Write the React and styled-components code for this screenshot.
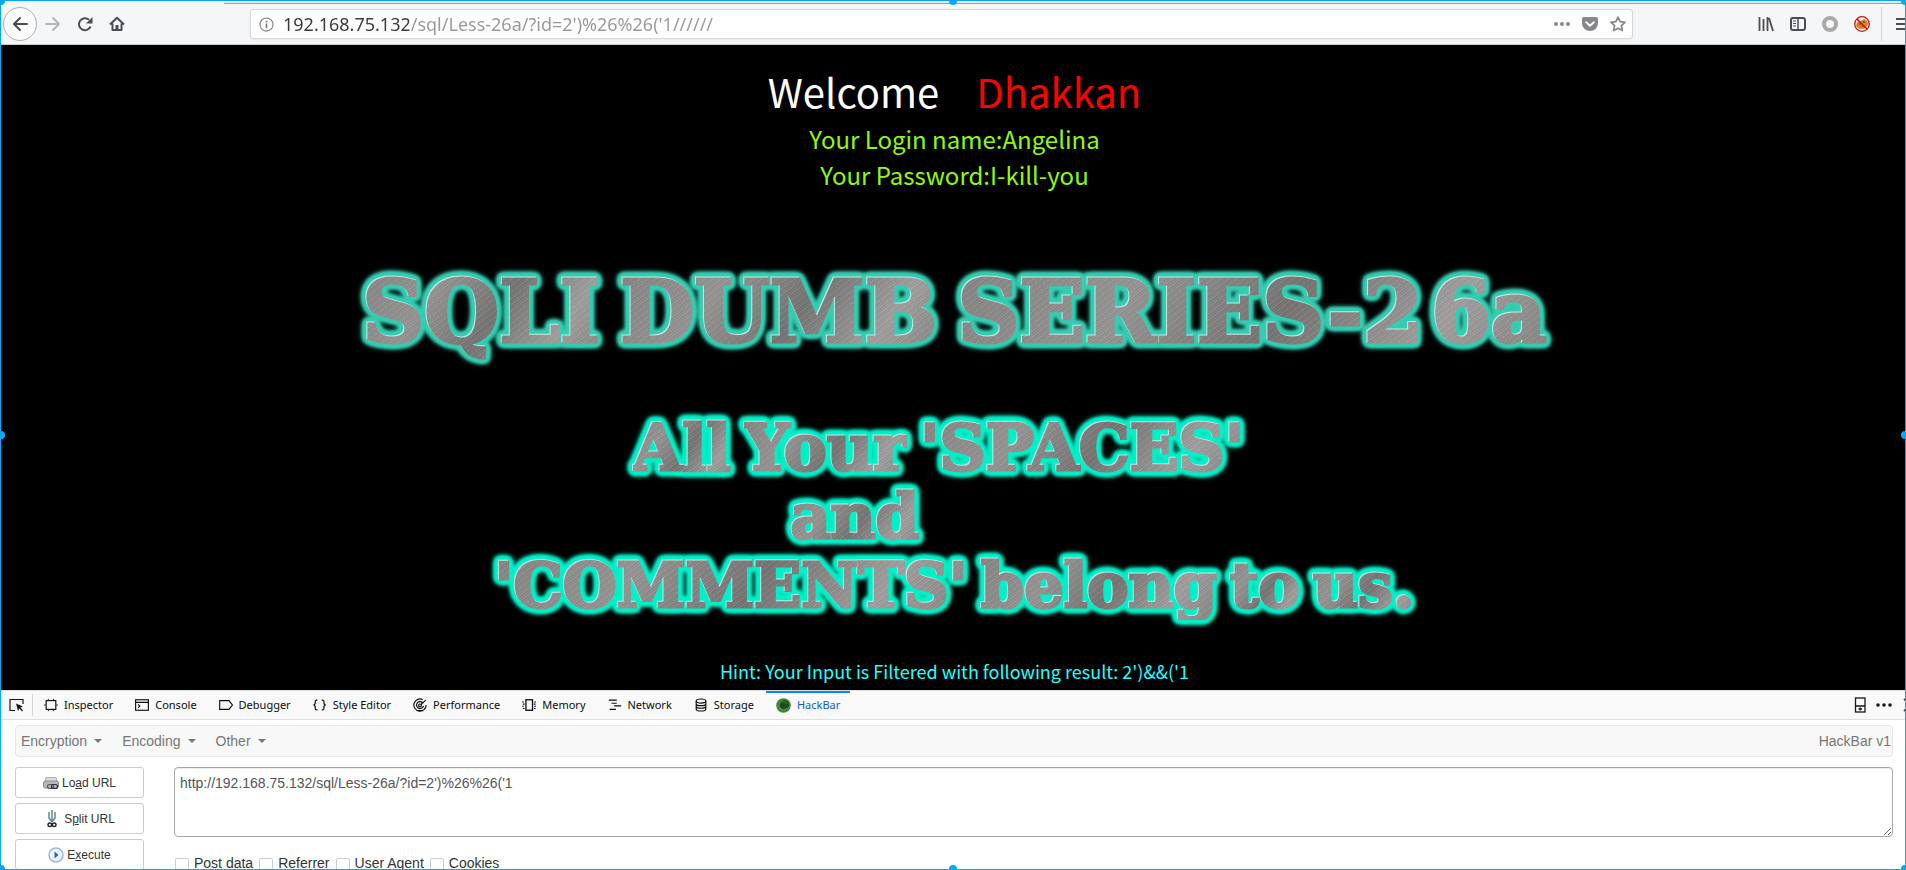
import React from "react";
import styled, { createGlobalStyle, css } from "styled-components";

const Global = createGlobalStyle`
  *, *::before, *::after { box-sizing: border-box; }
  html, body { margin: 0; height: 100%; overflow: hidden; background: #fff; }
  button, input, textarea { font: inherit; }
`;

const uiFont = `"Noto Sans", "Open Sans", sans-serif`;
const pageFont = `"Noto Sans CJK SC", "Noto Sans", sans-serif`;
const barFont = `"Liberation Sans", Arial, sans-serif`;

const Window = styled.div`
  display: flex;
  flex-direction: column;
  height: 100vh;
  overflow: hidden;
`;

/* selection frame over the window */
const Frame = styled.div`
  position: fixed;
  inset: 0;
  border: 1px solid #0aa7f5;
  pointer-events: none;
`;
const Handle = styled.i`
  position: absolute;
  left: ${(p) => p.$x};
  top: ${(p) => p.$y};
  width: 8px;
  height: 8px;
  margin: -4px;
  border-radius: 4px;
  background: #0aa7f5;
`;

/* ---------- browser toolbar ---------- */
const TabEdge = styled.div`
  flex: none;
  height: 4px;
  margin-left: 224px;
  background: #eeeef0;
  border-bottom: 1px solid #9d9da3;
`;
const Chrome = styled.header`
  flex: none;
  background: #f5f6f7;
  border-bottom: 1px solid #ccc;
`;
const NavBar = styled.div`
  display: flex;
  align-items: center;
  height: 40px;
  margin-right: -13px;
  padding-left: 3px;
`;
const IconButton = styled.button`
  flex: none;
  display: grid;
  place-items: center;
  width: 32px;
  height: 32px;
  padding: 0;
  border: 0;
  background: none;
  color: ${(p) => (p.$dim ? "#b5b6b9" : "#4c4c54")};
  ${(p) =>
    p.$round &&
    css`
      width: 34px;
      height: 34px;
      border: 1px solid #b0b0b2;
      border-radius: 50%;
      background: #fcfcfc;
    `}
`;
const UrlBox = styled.div`
  flex: 1;
  display: flex;
  align-items: center;
  height: 30px;
  margin: 0 117px;
  padding: 0 0 0 8px;
  background: #fff;
  border: 1px solid #d8d8dc;
  border-radius: 3px;
  box-shadow: 0 1px 3px rgba(0, 0, 0, 0.06);
`;
const UrlInput = styled.input`
  flex: 1;
  min-width: 0;
  height: 28px;
  margin-left: 9px;
  padding: 0;
  border: 0;
  outline: 0;
  font: 18px/28px ${uiFont};
  color: transparent;
  background: linear-gradient(to right, #38383d 126px, #98989b 126px);
  background-clip: text;
  -webkit-background-clip: text;
`;
const UrlAction = styled(IconButton)`
  width: 28px;
  height: 28px;
  color: #87878b;
`;
const Divider = styled.span`
  flex: none;
  width: 1px;
  height: ${(p) => p.$h};
  margin: ${(p) => p.$m};
  background: #d4d4d8;
`;

/* ---------- web page ---------- */
const Page = styled.main`
  flex: none;
  display: flex;
  flex-direction: column;
  align-items: center;
  padding-left: 3px;
  background: #000;
  font-family: ${pageFont};
  white-space: pre;
`;
const Welcome = styled.h1`
  margin: 0;
  padding-top: 16px;
  font-size: 40px;
  line-height: 60px;
  font-weight: 400;
  color: #fff;
`;
const Name = styled.span`
  margin-left: 37px;
  color: #f00;
`;
const Result = styled.p`
  margin: 0;
  text-align: center;
  font-size: 24px;
  line-height: 36px;
  color: #90f90a;
`;
const Banner = styled.section`
  display: flex;
  flex-direction: column;
  margin-top: ${(p) => p.$top};
`;
const Steel = styled.p`
  display: flex;
  gap: ${(p) => p.$gap};
  align-self: ${(p) => p.$align || "center"};
  margin: ${(p) => p.$m || "0"};
  font-family: "DejaVu Serif", serif;
  font-weight: 700;
  font-size: ${(p) => p.$size};
  line-height: ${(p) => p.$line};
  filter: drop-shadow(-1px -1px 0 #c4ece6) drop-shadow(0 0 2px ${(p) => p.$glow})
    drop-shadow(0 0 1px ${(p) => p.$glow}) drop-shadow(0 0 1px ${(p) => p.$glow})
    drop-shadow(0 0 1px ${(p) => p.$glow}) drop-shadow(0 0 1px ${(p) => p.$glow})
    drop-shadow(0 0 2px ${(p) => p.$glow});
`;
const Word = styled.span`
  color: transparent;
  -webkit-text-stroke: 3px transparent;
  background: repeating-linear-gradient(
      142deg,
      rgba(255, 255, 255, 0.08) 0 1px,
      rgba(0, 0, 0, 0.06) 2px,
      rgba(255, 255, 255, 0.02) 3px 4px,
      rgba(0, 0, 0, 0.05) 5px
    ),
    linear-gradient(125deg, #858282, #959292 30%, #757272 55%, #a09d9d 80%, #858282);
  background-clip: text;
  -webkit-background-clip: text;
`;
const Digits = styled.span`
  margin-left: 8px;
`;
const Hint = styled.p`
  margin: 35px 0 0;
  padding-bottom: 3px;
  font-size: 18px;
  line-height: 32px;
  color: #2ff;
`;

/* ---------- developer tools ---------- */
const Tools = styled.section`
  flex: none;
  background: #fff;
`;
const TabRow = styled.div`
  display: flex;
  align-items: center;
  height: 30px;
  margin-right: -12px;
  padding-left: 9px;
  background: #f9f9fa;
  border-top: 1px solid #e0e0e1;
  border-bottom: 1px solid #e0e0e1;
`;
const ToolIcon = styled.button`
  flex: none;
  display: grid;
  place-items: center;
  width: 16px;
  height: 16px;
  padding: 0;
  border: 0;
  background: none;
  color: #18181a;
`;
const Tab = styled.button`
  display: flex;
  align-items: center;
  gap: 6px;
  height: 28px;
  margin-right: 2px;
  padding: 0 10px;
  border: 0;
  border-top: 2px solid ${(p) => (p.$on ? "#0a84ff" : "transparent")};
  border-bottom: 2px solid transparent;
  background: none;
  font: 11px/24px ${uiFont};
  white-space: nowrap;
  color: ${(p) => (p.$on ? "#0a60df" : "#0c0c0d")};
`;
const Grow = styled.span`
  flex: 1;
`;
const HackBar = styled.div`
  padding: 5px 13px 0 15px;
  font-family: ${barFont};
  font-size: 14px;
`;
const Menu = styled.nav`
  display: flex;
  align-items: center;
  height: 32px;
  padding: 0 1px 0 5px;
  background: #f8f8f8;
  border: 1px solid #e7e7e7;
  border-radius: 4px;
  color: #777;
`;
const MenuButton = styled.button`
  display: flex;
  align-items: center;
  gap: 7px;
  margin-right: 20px;
  padding: 0;
  border: 0;
  background: none;
  color: inherit;
  &::after {
    content: "";
    border: 4px solid transparent;
    border-top-color: #777;
    border-bottom: 0;
  }
`;
const Body = styled.div`
  display: grid;
  grid-template-columns: 129px 1fr;
  column-gap: 30px;
  margin-top: 10px;
`;
const Actions = styled.div`
  display: flex;
  flex-direction: column;
  gap: 5px;
`;
const Action = styled.button`
  display: flex;
  align-items: center;
  justify-content: center;
  gap: 3px;
  height: 31px;
  padding: 0;
  background: #fff;
  border: 1px solid #ccc;
  border-radius: 3px;
  font-size: 12px;
  color: #333;
`;
const Query = styled.textarea`
  display: block;
  width: 100%;
  height: 70px;
  padding: 5px;
  border: 1px solid #aaa;
  border-radius: 4px;
  outline: 0;
  box-shadow: inset 0 1px 1px rgba(0, 0, 0, 0.075);
  font-size: 14px;
  line-height: 20px;
  color: #555;
  resize: vertical;
`;
const Checks = styled.div`
  display: flex;
  gap: 6px;
  margin: 16px 0 0 1px;
`;
const Check = styled.label`
  display: flex;
  align-items: center;
  gap: 5px;
  line-height: 20px;
  color: #333;
`;
const Box = styled.input`
  appearance: none;
  width: 14px;
  height: 14px;
  margin: 4px 0 0;
  border: 1px solid #c8cde0;
  border-radius: 2px;
  background: #fff;
`;

const S = ({ size = 16, w = 2, children }) => (
  <svg width={size} height={size} viewBox="0 0 16 16" fill="none" stroke="currentColor" strokeWidth={w} aria-hidden="true">
    {children}
  </svg>
);
const Dots = ({ r = 2 }) => (
  <S>
    <g fill="currentColor" stroke="none">
      <circle cx="2" cy="8" r={r} /><circle cx="8" cy="8" r={r} /><circle cx="14" cy="8" r={r} />
    </g>
  </S>
);

const tabs = [
  ["Inspector", <S size={14} w={1.3}><rect x="2.5" y="3" width="11" height="10" /><path d="M0 8h2M14 8h2M5 1v2M11 1v2M5 13v2M11 13v2" strokeWidth="1" /></S>],
  ["Console", <S size={14} w={1.3}><rect x=".7" y="2" width="14.6" height="12" /><path d="M1 5h14M3.5 7.2l2 2-2 2" /></S>],
  ["Debugger", <S size={14} w={1.3}><path d="M.8 3h10.5l4 5-4 5H.8z" /></S>],
  ["Style Editor", <S size={14} w={1.3}><path d="M5 2.500h-1a1.500 1.500 0 0 0-1.500 1.500v2.500L1 8l1.500 1.500V12A1.500 1.500 0 0 0 4 13.500h1M10 2.500h1A1.500 1.500 0 0 1 12.500 4v2.500L14 8l-1.500 1.500V12a1.500 1.500 0 0 1-1.500 1.500h-1" /></S>],
  ["Performance", <S size={14} w={1.3}><path d="M11 1.700A7 7 0 1 0 15 8M11.500 6A4 4 0 1 0 12 9M5 14.500h7" /><circle cx="8" cy="8.500" r="1.600" /><path d="M9 7.500l5.500-5" /></S>],
  ["Memory", <S size={14} w={1.5}><rect x="4.500" y="2" width="7.500" height="12" /><path d="M0 4.500h2M1 7h2M0 9.500h2M1 12h2M14 4.500h2M13.500 7h2M14 9.500h2M13.500 12h2" strokeWidth="1.200" /></S>],
  ["Network", <S size={14} w={1.3}><path d="M1 2.500h9M4 6h6M7 9h8M2 13h7" /></S>],
  ["Storage", <S size={14} w={1.3}><ellipse cx="8" cy="3.500" rx="5.500" ry="2.300" /><path d="M2.500 3.500v9c0 3.200 11 3.200 11 0v-9M2.500 6.500c0 3 11 3 11 0M2.500 9.500c0 3 11 3 11 0" /></S>],
  ["HackBar", <S size={15} w={1}><circle cx="8" cy="8" r="7.800" fill="#3f8a3a" stroke="none" /><circle cx="9" cy="7.500" r="5" fill="#1f4a20" stroke="none" /><path d="M5 5c2-2 6-1 6.500 1.500" stroke="#4f8a46" /><path d="M3 10c3 3 7 3 10 0" stroke="#5a9c50" /></S>],
];

export default function App() {
  return (
    <Window>
      <Global />
      <Chrome>
        <TabEdge />
        <NavBar>
          <IconButton $round aria-label="Back"><S><path d="M15 8H2M8 2L2 8l6 6" strokeLinecap="round" strokeLinejoin="round" /></S></IconButton>
          <IconButton $dim aria-label="Forward"><S><path d="M1 8h13M8 2l6 6-6 6" strokeLinecap="round" strokeLinejoin="round" /></S></IconButton>
          <IconButton aria-label="Reload"><S><path d="M13.500 10.500A6 6 0 1 1 12 3.800" /><path d="M15.500 1v6.500H9z" fill="currentColor" stroke="none" /></S></IconButton>
          <IconButton aria-label="Home"><S><path d="M1 8.500L8 1.800l7 6.700M3.500 7.500V14h9V7.500" strokeLinejoin="round" /><path d="M8 14V9" strokeWidth="3" /></S></IconButton>
          <UrlBox>
            <S size={15} w={1.2}><circle cx="8" cy="8" r="7" stroke="#808084" /><path d="M8 7v5M8 4v1.800" strokeWidth="1.800" stroke="#808084" /></S>
            <UrlInput aria-label="Address" defaultValue="192.168.75.132/sql/Less-26a/?id=2')%26%26('1//////" />
            <UrlAction aria-label="Page actions"><Dots /></UrlAction>
            <UrlAction aria-label="Save to Pocket"><S><path d="M2 1h12a2 2 0 0 1 2 2v4.500a8 7.500 0 0 1-16 0V3a2 2 0 0 1 2-2z" fill="currentColor" stroke="none" /><path d="M4.200 6.200L8 9.700l3.800-3.500" stroke="#fff" strokeLinecap="round" strokeLinejoin="round" /></S></UrlAction>
            <UrlAction aria-label="Bookmark"><S w={1.7}><path d="M8 1.200l2.100 4.500 4.900.6-3.600 3.400 1 4.900L8 12.200l-4.400 2.400 1-4.900L1 6.300l4.900-.6z" strokeLinejoin="round" /></S></UrlAction>
          </UrlBox>
          <IconButton aria-label="Library"><S><path d="M1.500 1v14M5.500 3v12M9.500 1v14M11 2l4 13" strokeWidth="1.800" /></S></IconButton>
          <IconButton aria-label="Sidebars"><S><rect x="1" y="2" width="14" height="12" rx="2" /><path d="M8 2v12" strokeWidth="1.500" /><path d="M3 5h3M3 7.500h3M3 10h3" strokeWidth="1" /></S></IconButton>
          <IconButton aria-label="Extension"><S><circle cx="8" cy="8" r="6" stroke="#a8a8a8" strokeWidth="4" /></S></IconButton>
          <IconButton aria-label="Cookies blocked"><S><circle cx="8" cy="8" r="7.300" fill="#f7ece4" stroke="#c4161c" strokeWidth="1.300" /><path d="M3 6l4-1 3-2 3 2 1 3-2 4-4 1-4-1-2-2z" fill="#d9821e" stroke="none" /><path d="M5 8h2M9 6h2M8 10h2" stroke="#8a4d10" strokeWidth="1.500" /><path d="M3 3l10 10" stroke="#c4161c" strokeWidth="1.500" /></S></IconButton>
          <Divider $h="34px" $m="0 5px 0 3px" />
          <IconButton aria-label="Menu"><S><path d="M1 3h14M1 8h14M1 13h14" /></S></IconButton>
        </NavBar>
      </Chrome>

      <Page>
        <Welcome>Welcome<Name>Dhakkan</Name></Welcome>
        <Result>Your Login name:Angelina</Result>
        <Result>Your Password:I-kill-you</Result>
        <Banner $top="69px">
          <Steel $size="86px" $line="100px" $gap="20px" $glow="#36cdb2">
            <Word>SQLI</Word><Word>DUMB</Word><Word>SERIES-2<Digits>6a</Digits></Word>
          </Steel>
        </Banner>
        <Banner $top="51px">
          <Steel $size="64px" $line="69px" $gap="13px" $glow="#00f0c8" $m="0 32px 0 0">
            <Word>All</Word><Word>Your</Word><Word>'SPACES'</Word>
          </Steel>
          <Steel $size="62px" $line="69px" $gap="13px" $glow="#00f0c8" $align="flex-start" $m="0 0 0 296px">
            <Word>and</Word>
          </Steel>
          <Steel $size="62px" $line="69px" $gap="13px" $glow="#00f0c8">
            <Word>'COMMENTS'</Word><Word>belong</Word><Word>to</Word><Word>us.</Word>
          </Steel>
        </Banner>
        <Hint>Hint: Your Input is Filtered with following result: 2')&amp;&amp;('1</Hint>
      </Page>

      <Tools>
        <TabRow>
          <ToolIcon aria-label="Pick element"><S w={1.2}><path d="M6 13.500H1v-11h13V7" /><path d="M7 6.500l7 3-2.500 1 2.500 3-1 1-2.500-3L9 14z" fill="currentColor" stroke="none" /></S></ToolIcon>
          <Divider $h="22px" $m="0 1px 0 7px" />
          {tabs.map(([name, icon]) => (
            <Tab key={name} $on={name === "HackBar"}>{icon}{name}</Tab>
          ))}
          <Grow />
          <ToolIcon aria-label="Dock side"><S w={1.3}><rect x="3.500" y="1" width="9.500" height="14" /><path d="M3.500 9h9.500M6.500 12h3.500M8.200 10.500v3" /></S></ToolIcon>
          <Divider $h="0px" $m="0 3px 0 4px" />
          <ToolIcon aria-label="More tools"><Dots r={1.8} /></ToolIcon>
          <Divider $h="0px" $m="0 4px 0 5px" />
          <ToolIcon aria-label="Close tools"><S w={1.5}><path d="M2 2l12 12M14 2L2 14" /></S></ToolIcon>
        </TabRow>
        <HackBar>
          <Menu>
            <MenuButton>Encryption</MenuButton>
            <MenuButton>Encoding</MenuButton>
            <MenuButton>Other</MenuButton>
            <Grow />
            <span>HackBar v1</span>
          </Menu>
          <Body>
            <Actions>
              <Action>
                <S><path d="M3 2.500h10l1 4H2z" fill="#ddd" stroke="#aaa" strokeWidth="1" /><rect x=".5" y="6" width="15" height="7" rx="2" fill="#b8b8b8" stroke="#8a8a8a" strokeWidth="1" /><rect x="4.500" y="9.500" width="6" height="4" rx="2" stroke="#555" strokeWidth="1.200" /><rect x="8.500" y="9.500" width="6" height="4" rx="2" stroke="#333" strokeWidth="1.200" /></S>
                <span>Lo<u>a</u>d URL</span>
              </Action>
              <Action>
                <svg width="17" height="18" viewBox="0 0 17 18" fill="none" aria-hidden="true"><path d="M5 2v6l3 4M11 2v6l-3 4M8 0v11" stroke="#5b8a9c" strokeWidth="1.500" /><circle cx="5.800" cy="14.800" r="1.800" stroke="#222" strokeWidth="1.400" /><circle cx="10.200" cy="14.800" r="1.800" stroke="#222" strokeWidth="1.400" /></svg>
                <span>S<u>p</u>lit URL</span>
              </Action>
              <Action>
                <S><circle cx="8" cy="8" r="7" fill="#eef4fd" stroke="#9db8dc" strokeWidth="1.500" /><path d="M6.500 4.500L10.500 8l-4 3.500z" fill="#2b62b8" stroke="none" /></S>
                <span>E<u>x</u>ecute</span>
              </Action>
            </Actions>
            <div>
              <Query aria-label="URL" defaultValue="http://192.168.75.132/sql/Less-26a/?id=2')%26%26('1" />
              <Checks>
                {["Post data", "Referrer", "User Agent", "Cookies"].map((t) => (
                  <Check key={t}><Box type="checkbox" />{t}</Check>
                ))}
              </Checks>
            </div>
          </Body>
        </HackBar>
      </Tools>

      <Frame>
        {["0%", "50%", "100%"].flatMap((x) =>
          ["0%", "50%", "100%"].filter((y) => !(x === "50%" && y === "50%")).map((y) => <Handle key={x + y} $x={x} $y={y} />)
        )}
      </Frame>
    </Window>
  );
}
